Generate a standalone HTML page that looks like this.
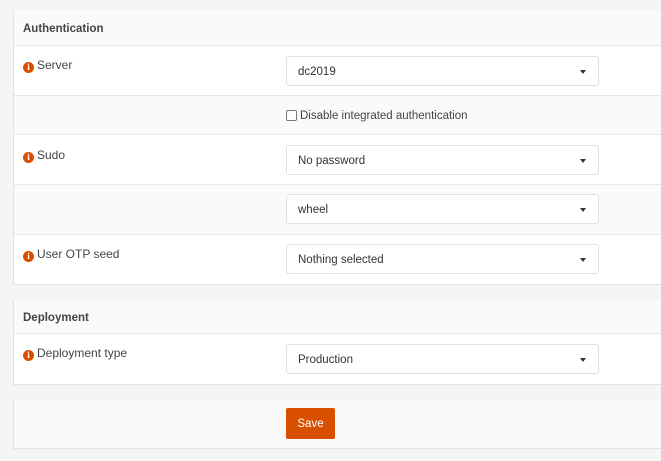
<!DOCTYPE html>
<html><head><style>
*{box-sizing:border-box;margin:0;padding:0}
body{width:661px;height:461px;background:#f5f5f5;font-family:"Liberation Sans",sans-serif;font-size:12px;color:#333;position:relative;overflow:hidden}
.p{position:absolute;left:13px;width:660px;border-left:1px solid #e3e3e3;border-bottom:1px solid #e3e3e3;background:#fff}
.r{position:absolute;left:0;right:0;border-bottom:1px solid #e8e8e8}
.g{background:#fafafa}
.h{font-weight:bold;font-size:11.5px;color:#444;padding-left:9px}
.l{position:absolute;left:9px;font-size:12px;color:#444}
.i{display:inline-block;width:11px;height:11px;border-radius:50%;background:#d94f00;color:#fff;font-size:9px;font-weight:bold;text-align:center;line-height:11px;font-family:"Liberation Serif",serif;vertical-align:-1px;margin-right:3px}
.s{position:absolute;left:272px;width:313px;height:30px;border:1px solid #e0e0e0;border-radius:3px;background:#fff;padding-left:11px;line-height:30px;font-size:11.5px;color:#333}
.s:after{content:"";position:absolute;right:12px;top:13px;border-left:3px solid transparent;border-right:3px solid transparent;border-top:4px solid #333}
</style></head><body>
<div class="p" style="top:10px;height:275px">
 <div class="r g h" style="top:0;height:36px;line-height:38px">Authentication</div>
 <div class="r" style="top:36px;height:50px"><div class="l" style="top:12px"><span class="i">i</span>Server</div><div class="s" style="top:10px">dc2019</div></div>
 <div class="r g" style="top:86px;height:39px"><div style="position:absolute;left:272px;top:14px;font-size:11.5px;color:#444"><span style="display:inline-block;width:11px;height:11px;border:1px solid #777;border-radius:2px;background:#fff;vertical-align:-2px;margin-right:3px"></span>Disable integrated authentication</div></div>
 <div class="r" style="top:125px;height:50px"><div class="l" style="top:13px"><span class="i">i</span>Sudo</div><div class="s" style="top:10px">No password</div></div>
 <div class="r g" style="top:175px;height:50px"><div class="s" style="top:9px">wheel</div></div>
 <div class="r" style="top:225px;height:49px;border:none"><div class="l" style="top:12px"><span class="i">i</span>User OTP seed</div><div class="s" style="top:9px">Nothing selected</div></div>
</div>
<div class="p" style="top:300px;height:85px">
 <div class="r g h" style="top:0;height:34px;line-height:36px">Deployment</div>
 <div class="r" style="top:34px;height:50px;border:none"><div class="l" style="top:12px"><span class="i">i</span>Deployment type</div><div class="s" style="top:10px">Production</div></div>
</div>
<div class="p g" style="top:400px;height:49px">
 <div style="position:absolute;left:272px;top:8px;width:49px;height:31px;background:#d94f00;border-radius:2px;color:#fff;font-size:11.5px;text-align:center;line-height:32px">Save</div>
</div>
</body></html>
